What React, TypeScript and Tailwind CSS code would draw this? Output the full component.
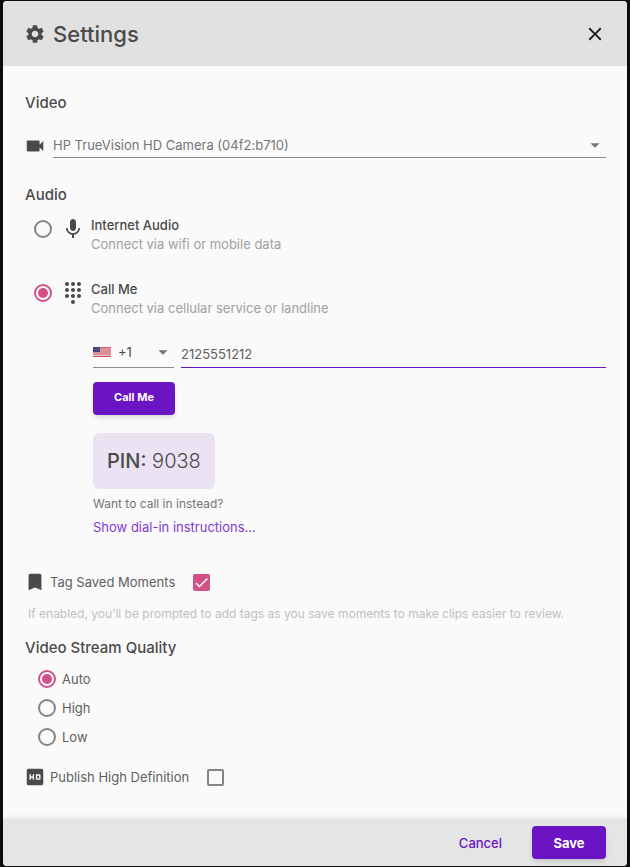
import React, { useState } from 'react';
import {
  MdArrowDropDown,
  MdBookmark,
  MdCheck,
  MdClose,
  MdDialpad,
  MdHd,
  MdMic,
  MdSettings,
  MdVideocam,
} from 'react-icons/md';

interface RadioProps {
  id: string;
  name: string;
  checked: boolean;
  onChange: () => void;
}

const Radio: React.FC<RadioProps> = ({ id, name, checked, onChange }) => (
  <input
    type="radio"
    id={id}
    name={name}
    checked={checked}
    onChange={onChange}
    className="grid size-[18px] shrink-0 appearance-none place-content-center rounded-full border-2 border-[#858585] before:size-[10px] before:rounded-full before:bg-transparent before:content-[''] checked:border-[#d25287] checked:before:bg-[#d25287]"
  />
);

interface CheckboxProps {
  id: string;
  checked: boolean;
  onChange: (checked: boolean) => void;
}

const Checkbox: React.FC<CheckboxProps> = ({ id, checked, onChange }) => (
  <span className="relative flex size-[17px] shrink-0">
    <input
      type="checkbox"
      id={id}
      checked={checked}
      onChange={(e) => onChange(e.target.checked)}
      className="size-full appearance-none rounded-xs border-2 border-[#858585] checked:border-[#d25287] checked:bg-[#d25287]"
    />
    {checked && <MdCheck className="pointer-events-none absolute inset-0 size-full text-white" />}
  </span>
);

const UsFlag: React.FC = () => (
  <svg viewBox="0 0 18 10" className="h-[10px] w-[18px] shrink-0" aria-hidden="true">
    <rect width="18" height="10" fill="#da8b95" />
    <rect width="18" height="1" fill="#c9606c" />
    {[1, 3, 5, 7].map((y) => (
      <rect key={y} y={y} width="18" height="1" fill="#dd949d" />
    ))}
    <rect y="8" width="18" height="1" fill="#edc4c8" />
    <rect y="9" width="18" height="1" fill="#c9505e" />
    <rect width="7" height="5" fill="#454579" />
    {[1, 3, 5].map((x) => (
      <circle key={x} cx={x + 0.5} cy="2.5" r="0.5" fill="#6a6a98" />
    ))}
  </svg>
);

const audioOptions = [
  { id: 'internet', title: 'Internet Audio', text: 'Connect via wifi or mobile data', Icon: MdMic },
  { id: 'call', title: 'Call Me', text: 'Connect via cellular service or landline', Icon: MdDialpad },
];

const qualities = ['Auto', 'High', 'Low'];

const App: React.FC = () => {
  const [audio, setAudio] = useState('call');
  const [phone, setPhone] = useState('2125551212');
  const [tagMoments, setTagMoments] = useState(true);
  const [quality, setQuality] = useState('Auto');
  const [publishHd, setPublishHd] = useState(false);

  return (
    <div className="flex min-h-screen flex-col bg-[#0c0b0d] px-[3px] py-px font-['Inter',sans-serif] text-[13px] leading-5 text-[#5f5f5f]">
      <div className="flex flex-1 flex-col overflow-hidden rounded-sm bg-[#fafafa]">
        <header className="flex h-[65px] items-center justify-between bg-[#e1e1e1] px-[21px]">
          <h1 className="flex items-center gap-[7px] text-[22px] leading-7 font-medium text-[#4a4a4a]">
            <MdSettings className="size-[22px]" />
            Settings
          </h1>
          <button aria-label="Close" className="text-[#1c1c1c]">
            <MdClose className="size-[22px]" />
          </button>
        </header>

        <main className="flex-1 px-[21px] pt-[27px] pb-6">
          <h2 className="pl-px text-[15px] leading-5 font-medium text-[#4a4a4a]">Video</h2>
          <div className="mt-5 flex items-center gap-[7px]">
            <MdVideocam className="size-[22px] text-[#4a4a4a]" />
            <div className="relative flex flex-1 items-center border-b border-[#8c8c8c]">
              <select aria-label="Camera" className="h-6 w-full appearance-none text-[#757575]">
                <option>HP TrueVision HD Camera (04f2:b710)</option>
              </select>
              <MdArrowDropDown className="pointer-events-none absolute right-0 size-[22px] text-[#757575]" />
            </div>
          </div>

          <h2 className="mt-[27px] pl-px text-[15px] leading-5 font-medium text-[#4a4a4a]">Audio</h2>
          <div className="mt-[11px] flex flex-col gap-[26px] pl-[10px]">
            {audioOptions.map(({ id, title, text, Icon }) => (
              <div key={id} className="flex">
                <div className="flex h-6 items-center gap-[9px] pt-px">
                  <Radio id={id} name="audio" checked={audio === id} onChange={() => setAudio(id)} />
                  <Icon className="size-6 text-[#4a4a4a]" />
                </div>
                <label htmlFor={id} className="ml-[6px] leading-[19px]">
                  <span className="block font-medium text-[#4a4a4a]">{title}</span>
                  <span className="block text-[#a0a0a0]">{text}</span>
                </label>
              </div>
            ))}
          </div>

          <div className="mt-[22px] ml-[69px] flex flex-col items-start">
            <div className="flex w-full gap-[7px]">
              <div className="relative flex h-7 w-[81px] items-center gap-[7px] border-b border-[#8c8c8c] pb-[3px]">
                <UsFlag />
                <select aria-label="Country code" className="h-full flex-1 appearance-none text-[#4a4a4a]">
                  <option>+1</option>
                </select>
                <MdArrowDropDown className="pointer-events-none absolute right-0 size-[22px] text-[#757575]" />
              </div>
              <input
                type="tel"
                aria-label="Phone number"
                value={phone}
                onChange={(e) => setPhone(e.target.value)}
                className="h-7 min-w-0 flex-1 border-b border-[#6b14c4] text-[#5f5f5f] outline-none"
              />
            </div>
            <button className="mt-[14px] h-[33px] w-[82px] rounded-sm bg-[#6b14c4] pb-[3px] text-[11px] font-bold text-white shadow-md">
              Call Me
            </button>
            <p className="mt-[18px] flex h-14 items-center rounded-md bg-[#ebe2f3] px-[14px] text-xl font-light text-[#4a4a4a]">
              <span><b className="font-medium">PIN:</b> 9038</span>
            </p>
            <p className="mt-[5px] text-xs leading-5 text-[#757575]">Want to call in instead?</p>
            <a href="#dial-in" className="mt-[3px] text-[#8438cf]">
              Show dial-in instructions...
            </a>
          </div>

          <div className="mt-[34px] flex items-center">
            <MdBookmark className="size-[22px] text-[#4a4a4a]" />
            <label htmlFor="tag-moments" className="mr-[18px] ml-1">
              Tag Saved Moments
            </label>
            <Checkbox id="tag-moments" checked={tagMoments} onChange={setTagMoments} />
          </div>
          <p className="mt-[11px] ml-1 text-xs leading-5 text-[#c0c0c0]">
            If enabled, you’ll be prompted to add tags as you save moments to make clips easier to review.
          </p>

          <h2 className="mt-[14px] pl-px text-[15px] leading-5 font-medium text-[#4a4a4a]">Video Stream Quality</h2>
          <div className="mt-[11px] flex flex-col gap-[9px] pl-[14px]">
            {qualities.map((q) => (
              <div key={q} className="flex items-center gap-[6px]">
                <Radio id={q} name="quality" checked={quality === q} onChange={() => setQuality(q)} />
                <label htmlFor={q}>{q}</label>
              </div>
            ))}
          </div>

          <div className="mt-[19px] flex items-center">
            <MdHd className="size-[22px] text-[#4a4a4a]" />
            <label htmlFor="publish-hd" className="mr-[18px] ml-1">
              Publish High Definition
            </label>
            <Checkbox id="publish-hd" checked={publishHd} onChange={setPublishHd} />
          </div>
        </main>

        <footer className="flex h-[47px] items-center justify-end gap-[30px] bg-[#e5e5e5] px-[21px] shadow-[0_0_6px_rgba(0,0,0,0.12)]">
          <button className="font-medium text-[#6b14c4]">Cancel</button>
          <button className="h-[33px] w-[74px] rounded-sm bg-[#6b14c4] font-bold text-white shadow-md">
            Save
          </button>
        </footer>
      </div>
    </div>
  );
};

export default App;
